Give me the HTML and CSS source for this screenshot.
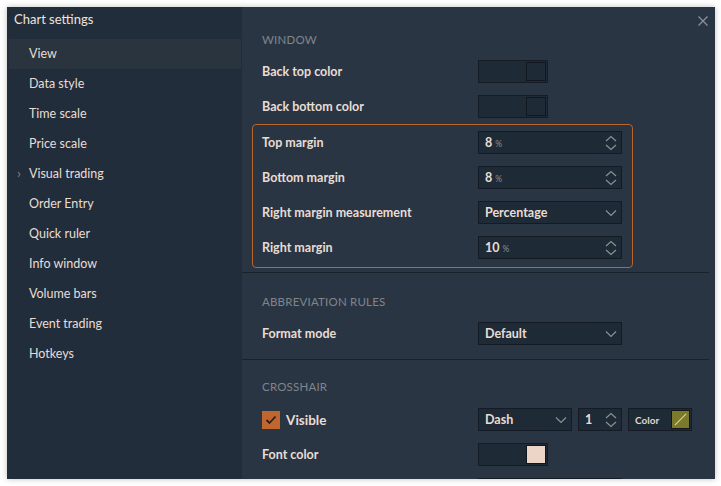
FILE: index.html
```html
<!DOCTYPE html>
<html>
<head>
<meta charset="utf-8">
<link rel="stylesheet" href="styles.css">
</head>
<body>
<div class="dialog">
  <aside class="sidebar">
    <div class="title">Chart settings</div>
    <nav class="nav">
      <div class="nav-item active">View</div>
      <div class="nav-item">Data style</div>
      <div class="nav-item">Time scale</div>
      <div class="nav-item">Price scale</div>
      <div class="nav-item"><span class="caret">›</span>Visual trading</div>
      <div class="nav-item">Order Entry</div>
      <div class="nav-item">Quick ruler</div>
      <div class="nav-item">Info window</div>
      <div class="nav-item">Volume bars</div>
      <div class="nav-item">Event trading</div>
      <div class="nav-item">Hotkeys</div>
    </nav>
  </aside>
  <main class="panel">
    <button class="close" aria-label="Close">
      <svg width="10" height="10" viewBox="0 0 10 10"><path d="M0.5 0.5L9.5 9.5M9.5 0.5L0.5 9.5" stroke="#8b929a" stroke-width="1.2" fill="none"/></svg>
    </button>
    <section class="section first">
      <div class="heading">WINDOW</div>
      <div class="row">
        <div class="label">Back top color</div>
        <div class="color-ctl"><span class="swatch dark"></span></div>
      </div>
      <div class="row">
        <div class="label">Back bottom color</div>
        <div class="color-ctl"><span class="swatch dark"></span></div>
      </div>
      <div class="highlight">
        <div class="row">
          <div class="label">Top margin</div>
          <div class="input"><span class="val">8</span><span class="unit">%</span>
            <svg class="spin" width="12" height="16" viewBox="0 0 12 16"><path d="M1 6L6 1.5L11 6M1 10L6 14.5L11 10" stroke="#8b9097" stroke-width="1.2" fill="none"/></svg>
          </div>
        </div>
        <div class="row">
          <div class="label">Bottom margin</div>
          <div class="input"><span class="val">8</span><span class="unit">%</span>
            <svg class="spin" width="12" height="16" viewBox="0 0 12 16"><path d="M1 6L6 1.5L11 6M1 10L6 14.5L11 10" stroke="#8b9097" stroke-width="1.2" fill="none"/></svg>
          </div>
        </div>
        <div class="row">
          <div class="label">Right margin measurement</div>
          <div class="input select"><span class="val">Percentage</span>
            <svg class="chev" width="12" height="8" viewBox="0 0 12 8"><path d="M1 1.5L6 6.5L11 1.5" stroke="#8b9097" stroke-width="1.2" fill="none"/></svg>
          </div>
        </div>
        <div class="row">
          <div class="label">Right margin</div>
          <div class="input"><span class="val">10</span><span class="unit">%</span>
            <svg class="spin" width="12" height="16" viewBox="0 0 12 16"><path d="M1 6L6 1.5L11 6M1 10L6 14.5L11 10" stroke="#8b9097" stroke-width="1.2" fill="none"/></svg>
          </div>
        </div>
      </div>
    </section>
    <section class="section">
      <div class="heading">ABBREVIATION RULES</div>
      <div class="row">
        <div class="label">Format mode</div>
        <div class="input select"><span class="val">Default</span>
          <svg class="chev" width="12" height="8" viewBox="0 0 12 8"><path d="M1 1.5L6 6.5L11 1.5" stroke="#8b9097" stroke-width="1.2" fill="none"/></svg>
        </div>
      </div>
    </section>
    <section class="section last">
      <div class="heading">CROSSHAIR</div>
      <div class="row">
        <div class="label check-label">
          <span class="checkbox"><svg width="12" height="10" viewBox="0 0 12 10"><path d="M1.5 5L4.5 8L10.5 1.5" stroke="#2a2119" stroke-width="1.8" fill="none"/></svg></span>
          Visible
        </div>
        <div class="controls">
          <div class="input select dash"><span class="val">Dash</span>
            <svg class="chev" width="12" height="8" viewBox="0 0 12 8"><path d="M1 1.5L6 6.5L11 1.5" stroke="#8b9097" stroke-width="1.2" fill="none"/></svg>
          </div>
          <div class="input num"><span class="val">1</span>
            <svg class="spin" width="12" height="16" viewBox="0 0 12 16"><path d="M1 6L6 1.5L11 6M1 10L6 14.5L11 10" stroke="#8b9097" stroke-width="1.2" fill="none"/></svg>
          </div>
          <div class="input colorbtn"><span class="small">Color</span>
            <span class="olive"><svg width="18" height="18" viewBox="0 0 18 18"><path d="M3 15L15 3" stroke="#d8d48a" stroke-width="1.2"/></svg></span>
          </div>
        </div>
      </div>
      <div class="row">
        <div class="label">Font color</div>
        <div class="color-ctl"><span class="swatch light"></span></div>
      </div>
      <div class="row">
        <div class="label"></div>
        <div class="input select"></div>
      </div>
    </section>
  </main>
</div>
</body>
</html>
```
FILE: styles.css
```css
* { box-sizing: border-box; }
html, body { margin: 0; padding: 0; }
body {
  background: #ffffff;
  font-family: Lato, "Open Sans", sans-serif;
  color: #e8ddd4;
  width: 721px;
  height: 486px;
  overflow: hidden;
}
.dialog {
  margin: 7px 0 0 7px;
  width: 708px;
  height: 472px;
  display: flex;
  box-shadow: 0 0 6px rgba(0,0,0,0.25);
  overflow: hidden;
}
.sidebar {
  width: 235px;
  background: #222d3b;
  flex: none;
}
.title {
  height: 32px;
  padding: 4px 0 0 7px;
  font-size: 13px;
  line-height: 16px;
  color: #eee4dc;
}
.nav { display: flex; flex-direction: column; }
.nav-item {
  height: 30px;
  line-height: 30px;
  padding-left: 20px;
  margin: 0 1px 0 2px;
  font-size: 12.5px;
  color: #e8ddd4;
  position: relative;
}
.nav-item.active { background: #29343f; }
.caret {
  position: absolute;
  left: 8px;
  top: -1px;
  color: #7d838b;
  font-size: 14px;
}
.panel {
  flex: 1;
  background: #2a3543;
  position: relative;
  padding-right: 6px;
}
.close {
  position: absolute;
  right: 6px;
  top: 8px;
  width: 12px;
  height: 12px;
  padding: 0;
  border: 0;
  background: transparent;
  display: flex;
  align-items: center;
  justify-content: center;
}
.section {
  padding: 21px 0 8px 20px;
  border-bottom: 1px solid #19212b;
}
.section.first { padding-top: 25px; padding-bottom: 4px; }
.section.last { border-bottom: 0; padding-top: 19px; }
.heading {
  font-size: 11.5px;
  line-height: 16px;
  color: #80858c;
  letter-spacing: 0.2px;
  margin-bottom: 6px;
}
.section.last .heading { margin-bottom: 7px; }
.row {
  height: 35px;
  display: flex;
  align-items: center;
}
.label {
  width: 216px;
  flex: none;
  font-size: 12.5px;
  font-weight: 700;
  color: #e8ddd4;
}
.highlight {
  margin-left: -10px;
  width: 381px;
  border: 1px solid #b8642a;
  border-radius: 4px;
  padding: 0 9px 2px 9px;
}
.color-ctl {
  width: 70px;
  height: 23px;
  background: #1f2a37;
  border: 1px solid #151c26;
  display: flex;
  justify-content: flex-end;
  align-items: center;
  padding-right: 1px;
}
.swatch {
  width: 20px;
  height: 19px;
  border: 1px solid #10171f;
}
.swatch.dark { background: #1f2a37; }
.swatch.light { background: #ecd4c7; }
.input {
  width: 144px;
  height: 23px;
  background: #1f2a37;
  border: 1px solid #141b25;
  display: flex;
  align-items: center;
  padding-left: 6px;
  padding-right: 4px;
  position: relative;
}
.val {
  font-size: 12.5px;
  font-weight: 700;
  color: #e8ddd4;
}
.unit {
  font-size: 8.5px;
  color: #8c9096;
  margin-left: 3px;
  margin-top: 2px;
}
.spin { margin-left: auto; }
.chev { margin-left: auto; margin-right: 0; }
.check-label {
  display: flex;
  align-items: center;
  gap: 6px;
  font-size: 13.5px;
}
.checkbox {
  width: 18px;
  height: 18px;
  background: #c2662f;
  display: flex;
  align-items: center;
  justify-content: center;
}
.controls { display: flex; gap: 6px; }
.input.dash { width: 94px; }
.input.num { width: 44px; }
.input.colorbtn { width: 64px; padding-right: 1px; }
.small { font-size: 10px; font-weight: 700; color: #e0d6ce; }
.olive {
  margin-left: auto;
  width: 19px;
  height: 19px;
  background: #7b7a2b;
  border: 1px solid #12171d;
  display: flex;
}
.olive svg { width: 17px; height: 17px; }
```
